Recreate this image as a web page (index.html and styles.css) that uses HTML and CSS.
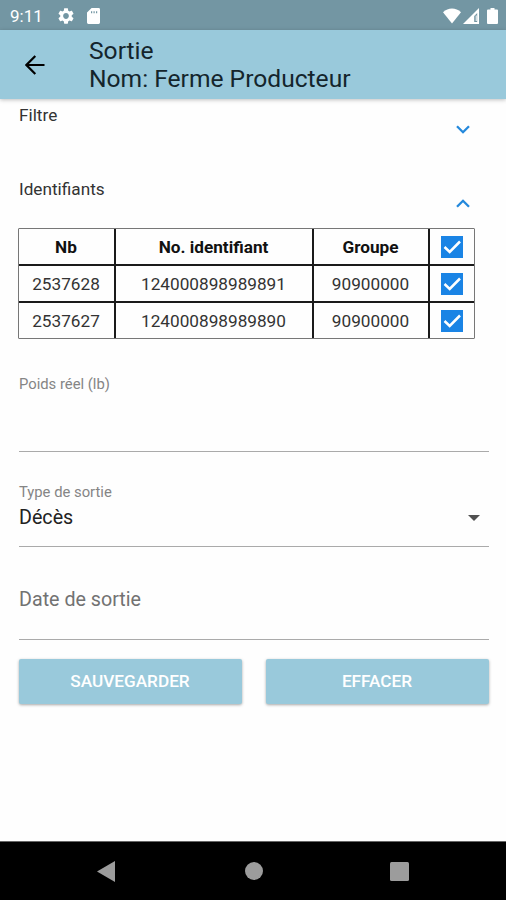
FILE: index.html
```html
<!DOCTYPE html>
<html lang="fr">
<head>
    <meta charset="UTF-8">
    <meta name="viewport" content="width=device-width, initial-scale=1.0">
    <title>Sortie</title>
    <link rel="stylesheet" href="styles.css">
</head>
<body>
    <div class="status-bar">
        <span class="clock">9:11</span>
        <svg class="icon-gear" viewBox="2 2 20 20"><path d="M19.14 12.94c.04-.3.06-.61.06-.94 0-.32-.02-.64-.07-.94l2.03-1.58c.18-.14.23-.41.12-.61l-1.92-3.32c-.12-.22-.37-.29-.59-.22l-2.39.96c-.5-.38-1.03-.7-1.62-.94l-.36-2.54c-.04-.24-.24-.41-.48-.41h-3.84c-.24 0-.43.17-.47.41l-.36 2.54c-.59.24-1.13.57-1.62.94l-2.39-.96c-.22-.08-.47 0-.59.22L2.74 8.87c-.12.21-.08.47.12.61l2.03 1.58c-.05.3-.09.63-.09.94s.02.64.07.94l-2.03 1.58c-.18.14-.23.41-.12.61l1.92 3.32c.12.22.37.29.59.22l2.39-.96c.5.38 1.03.7 1.62.94l.36 2.54c.05.24.24.41.48.41h3.84c.24 0 .44-.17.47-.41l.36-2.54c.59-.24 1.13-.56 1.62-.94l2.39.96c.22.08.47 0 .59-.22l1.92-3.32c.12-.22.07-.47-.12-.61l-2.01-1.58zM12 15.6c-1.98 0-3.6-1.62-3.6-3.6s1.62-3.6 3.6-3.6 3.6 1.62 3.6 3.6-1.62 3.6-3.6 3.6z"/></svg>
        <svg class="icon-sd" viewBox="0 0 13 16"><path fill-rule="evenodd" d="M4.6 0H11.6Q13 0 13 1.4V14.6Q13 16 11.6 16H1.4Q0 16 0 14.6V4.6ZM4 3.2V5.2H5.2V3.2ZM6.5 3.2V5.2H7.7V3.2ZM9 3.2V5.2H10.2V3.2Z"/></svg>
        <div class="status-right">
            <svg class="icon-wifi" viewBox="0 0 18 16"><path d="M9 15.5L0 4.2Q4 .5 9 .5T18 4.2Z"/></svg>
            <svg class="icon-signal" viewBox="0 0 16 16"><path fill-rule="evenodd" d="M16 0V16H0ZM14.2 5L11.2 8V14H14.2Z"/><path d="M12.7 7.5H13.7V13H12.7Z"/></svg>
            <svg class="icon-battery" viewBox="0 0 11 16"><path d="M3.5 0H7.5V1.6H10Q11 1.6 11 2.6V15Q11 16 10 16H1Q0 16 0 15V2.6Q0 1.6 1 1.6H3.5Z"/></svg>
        </div>
    </div>

    <header class="toolbar">
        <svg class="back" viewBox="0 0 20 20"><path d="M19.5 10H1.5M10.3 1L1.4 10L10.3 19"/></svg>
        <h1>Sortie<br>Nom: Ferme Producteur</h1>
    </header>

    <main class="content">
        <div class="panel">
            <span>Filtre</span>
            <svg class="chevron" viewBox="0 0 14 9"><path d="M1 1.2L7 7.2L13 1.2"/></svg>
        </div>
        <div class="panel">
            <span>Identifiants</span>
            <svg class="chevron" viewBox="0 0 14 9"><path d="M1 7.8L7 1.8L13 7.8"/></svg>
        </div>

        <div class="table">
            <div class="cell head">Nb</div>
            <div class="cell head">No. identifiant</div>
            <div class="cell head">Groupe</div>
            <div class="cell check"><svg viewBox="0 0 22 22"><path d="M3.5 11L8.7 16L19 5.5"/></svg></div>

            <div class="cell">2537628</div>
            <div class="cell">124000898989891</div>
            <div class="cell">90900000</div>
            <div class="cell check"><svg viewBox="0 0 22 22"><path d="M3.5 11L8.7 16L19 5.5"/></svg></div>

            <div class="cell last">2537627</div>
            <div class="cell last">124000898989890</div>
            <div class="cell last">90900000</div>
            <div class="cell check last"><svg viewBox="0 0 22 22"><path d="M3.5 11L8.7 16L19 5.5"/></svg></div>
        </div>

        <div class="field poids">
            <label>Poids réel (lb)</label>
        </div>
        <div class="field type">
            <label>Type de sortie</label>
            <div class="select">
                <span>Décès</span>
                <svg class="caret" viewBox="0 0 12 6"><path d="M0 0H12L6 6Z"/></svg>
            </div>
        </div>
        <div class="field date">
            <span class="placeholder">Date de sortie</span>
        </div>

        <div class="buttons">
            <button type="button">SAUVEGARDER</button>
            <button type="button">EFFACER</button>
        </div>
    </main>

    <footer class="nav-bar">
        <svg viewBox="0 0 18 21"><path d="M18 0V21L0 10.5Z"/></svg>
        <svg viewBox="0 0 18 18"><circle cx="9" cy="9" r="9"/></svg>
        <svg viewBox="0 0 19 19"><rect width="19" height="19" rx="1.5"/></svg>
    </footer>
</body>
</html>
```
FILE: styles.css
```css
* {
    box-sizing: border-box;
    margin: 0;
    padding: 0;
}

body {
    display: flex;
    flex-direction: column;
    height: 900px;
    overflow: hidden;
    font-family: Roboto, sans-serif;
    background-color: #fefefe;
    color: #333;
}

svg {
    display: block;
    flex: none;
}

.status-bar {
    display: flex;
    align-items: center;
    height: 30px;
    padding: 1px 8px 0 10px;
    background-color: #7396a3;
    color: #fff;
    fill: #fff;
}

.clock {
    width: 48px;
    font-size: 17px;
}

.icon-gear {
    width: 16px;
    height: 16px;
}

.icon-sd {
    width: 13px;
    height: 16px;
    margin-left: 13px;
}

.status-right {
    display: flex;
    margin-left: auto;
}

.icon-wifi {
    width: 18px;
    height: 16px;
}

.icon-signal {
    width: 16px;
    height: 16px;
    margin-left: 2px;
}

.icon-battery {
    width: 11px;
    height: 16px;
    margin-left: 8px;
}

.toolbar {
    display: flex;
    align-items: center;
    height: 69px;
    padding-left: 25px;
    background-color: #99c9db;
    box-shadow: 0 1px 4px rgba(0, 0, 0, 0.25);
}

.back {
    width: 20px;
    height: 20px;
    fill: none;
    stroke: #000;
    stroke-width: 2.2;
}

h1 {
    margin-left: 44px;
    font-size: 24.6px;
    font-weight: 400;
    line-height: 28px;
    color: #14252c;
}

.content {
    flex: 1;
    padding: 0 17px 0 19px;
}

.panel {
    display: flex;
    justify-content: space-between;
    height: 74px;
    padding: 5px 19px 0 0;
    font-size: 17.2px;
    line-height: 22px;
}

.panel + .panel {
    height: 55px;
}

.chevron {
    width: 14px;
    height: 9px;
    margin-top: 21px;
    fill: none;
    stroke: #2489dc;
    stroke-width: 2.3;
}

.table {
    display: grid;
    grid-template-columns: 97px 198px 116px 44px;
    grid-template-rows: 37px 37px 35px;
    width: 457px;
    margin-left: -1px;
    border: 1px solid #777;
    border-radius: 1px;
}

.cell {
    display: flex;
    align-items: center;
    justify-content: center;
    padding-right: 1px;
    border-right: 2px solid #1a1a1a;
    border-bottom: 2px solid #1a1a1a;
    font-size: 17.2px;
    white-space: nowrap;
}

.head {
    font-weight: 700;
    color: #111;
}

.check {
    padding-right: 0;
    border-right: none;
}

.last {
    border-bottom: none;
}

.check svg {
    width: 22px;
    height: 22px;
    background-color: #1a84e5;
    fill: none;
    stroke: #fff;
    stroke-width: 2.5;
}

.field {
    width: 470px;
    border-bottom: 1px solid #aaa;
}

label {
    display: block;
    font-size: 14.8px;
    line-height: 20px;
    color: #858585;
}

.poids {
    height: 113px;
    padding-top: 35px;
}

.type {
    height: 95px;
    padding-top: 30px;
}

.date {
    height: 93px;
    padding-top: 40px;
}

.select {
    display: flex;
    align-items: center;
    justify-content: space-between;
    height: 31px;
    padding-right: 9px;
    font-size: 19.7px;
    color: #222;
}

.caret {
    width: 12px;
    height: 6px;
    fill: #505050;
}

.placeholder {
    font-size: 19.7px;
    line-height: 26px;
    color: #727272;
}

.buttons {
    display: flex;
    gap: 24px;
    margin-top: 19px;
}

button {
    width: 223px;
    height: 45px;
    padding: 0 1px 1px 0;
    border: none;
    border-radius: 2px;
    background-color: #99c9db;
    box-shadow: 0 1px 3px rgba(0, 0, 0, 0.35);
    color: #fff;
    font-family: inherit;
    font-size: 17.2px;
    font-weight: 500;
}

.nav-bar {
    display: flex;
    align-items: center;
    height: 59px;
    padding-left: 97px;
    border-top: 1px solid #666;
    background-color: #000;
    fill: #9c9c9c;
}

.nav-bar svg {
    width: 18px;
    height: 21px;
}

.nav-bar svg + svg {
    height: 18px;
    margin-left: 130px;
}

.nav-bar svg + svg + svg {
    width: 19px;
    height: 19px;
    margin-left: 127px;
}
```
